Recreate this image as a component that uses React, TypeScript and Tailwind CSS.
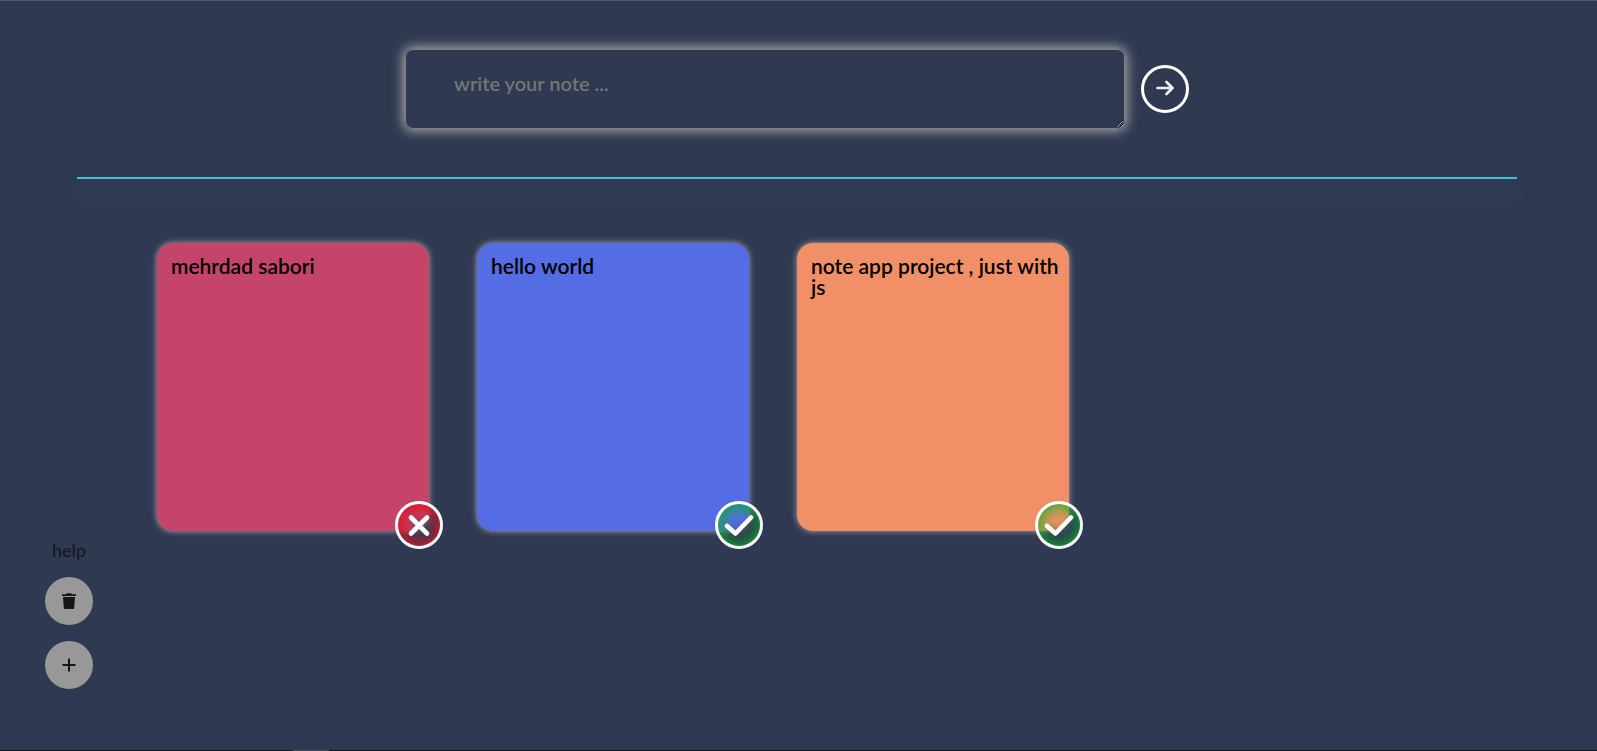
import { useState } from "react";

type Note = { id: number; text: string; color: string; done: boolean };

const notes: Note[] = [
  { id: 1, text: "mehrdad sabori", color: "bg-[#c5456a]", done: false },
  { id: 2, text: "hello world", color: "bg-[#546de5]", done: true },
  { id: 3, text: "note app project , just with js", color: "bg-[#f19066]", done: true },
];

function ArrowIcon() {
  return (
    <svg viewBox="0 0 18 16" className="mb-0.5 h-4 w-[18px]" fill="none" stroke="#f1f1f1" strokeWidth="2.6" strokeLinecap="round" strokeLinejoin="round" aria-hidden="true">
      <path d="M1.5 8H16M10.500 2l6 6-6 6" />
    </svg>
  );
}

function CrossIcon() {
  return (
    <svg viewBox="0 0 42 42" className="size-full overflow-visible drop-shadow-[4px_4px_4px_#334155]" fill="none" stroke="white" strokeWidth="4.6" strokeLinecap="round" aria-hidden="true">
      <path d="M13 13.5L29 29.5M29 13.5L13 29.5" />
    </svg>
  );
}

function CheckIcon() {
  return (
    <svg viewBox="0 0 42 42" className="size-full overflow-visible drop-shadow-[4px_4px_4px_#334155]" fill="none" stroke="white" strokeWidth="4.6" strokeLinecap="round" strokeLinejoin="round" aria-hidden="true">
      <path d="M9 22L17.5 29.5L33 13.5" />
    </svg>
  );
}

function TrashIcon() {
  return (
    <svg viewBox="0 0 14 16" className="h-4 w-3.5" fill="#161616" aria-hidden="true">
      <path d="M0 1.2h4L5 .2h4l1 1h4v1.800H0zM1 4h12l-.8 11q-.1 1-1.200 1H3q-1.100 0-1.200-1z" />
    </svg>
  );
}

function PlusIcon() {
  return (
    <svg viewBox="0 0 14 14" className="size-3.5" stroke="#161616" strokeWidth="2" aria-hidden="true">
      <path d="M7 .5v13M.5 7h13" />
    </svg>
  );
}

function NoteCard({ note }: { note: Note }) {
  return (
    <li className={`relative h-72 rounded-2xl py-3 pr-2 pl-3.5 text-[21px] leading-[21px] font-semibold text-black shadow-[0_0_6px_#a9a9a9] ${note.color}`}>
      <p>{note.text}</p>
      <button
        type="button"
        aria-label={note.done ? "Mark as not done" : "Mark as done"}
        className={`absolute -right-3.5 -bottom-[18px] size-12 rounded-full border-3 border-white ${
          note.done ? "shadow-[inset_0_0_16px_1px_#00b81c]" : "shadow-[inset_0_0_16px_4px_#e01020]"
        }`}
      >
        {note.done ? <CheckIcon /> : <CrossIcon />}
      </button>
    </li>
  );
}

export default function App() {
  const [draft, setDraft] = useState("");
  return (
    <div className="relative min-h-screen border-t border-b border-t-[#565a61] border-b-[#17171f] bg-[#303952] pr-[3px] font-['Lato',sans-serif]">
      <form className="flex items-center justify-center gap-4 px-4 pt-12" onSubmit={(e) => e.preventDefault()}>
        <textarea
          aria-label="Note"
          placeholder="write your note ..."
          value={draft}
          onChange={(e) => setDraft(e.target.value)}
          className="h-20 w-full max-w-[720px] rounded-lg border border-[#808080] bg-transparent px-12 py-[21px] text-[20px] leading-6 font-semibold text-white shadow-[0_0_12px_2px_#a9a9a9] outline-none placeholder:text-[#757575]"
        />
        <button type="submit" aria-label="Add note" className="flex size-12 shrink-0 items-center justify-center rounded-full border-3 border-white">
          <ArrowIcon />
        </button>
      </form>

      <hr className="mx-[77px] mt-12 border-t-2 border-[#3dc1d3] shadow-[0_15px_20px_#3dc1d34d]" />

      <ul className="mx-[157px] mt-16 grid grid-cols-[repeat(auto-fill,272px)] gap-12">
        {notes.map((note) => (
          <NoteCard key={note.id} note={note} />
        ))}
      </ul>

      <aside className="fixed bottom-[62px] left-[45px] flex flex-col items-center gap-4">
        <p className="mb-px text-[18px] leading-5 font-semibold text-[#171a20]">help</p>
        <button type="button" aria-label="Delete notes" className="flex size-12 items-center justify-center rounded-full bg-[#989898]">
          <TrashIcon />
        </button>
        <button type="button" aria-label="New note" className="flex size-12 items-center justify-center rounded-full bg-[#989898]">
          <PlusIcon />
        </button>
      </aside>
      <div className="absolute -bottom-px left-[293px] h-px w-9 bg-[#4b4b58]" />
    </div>
  );
}
